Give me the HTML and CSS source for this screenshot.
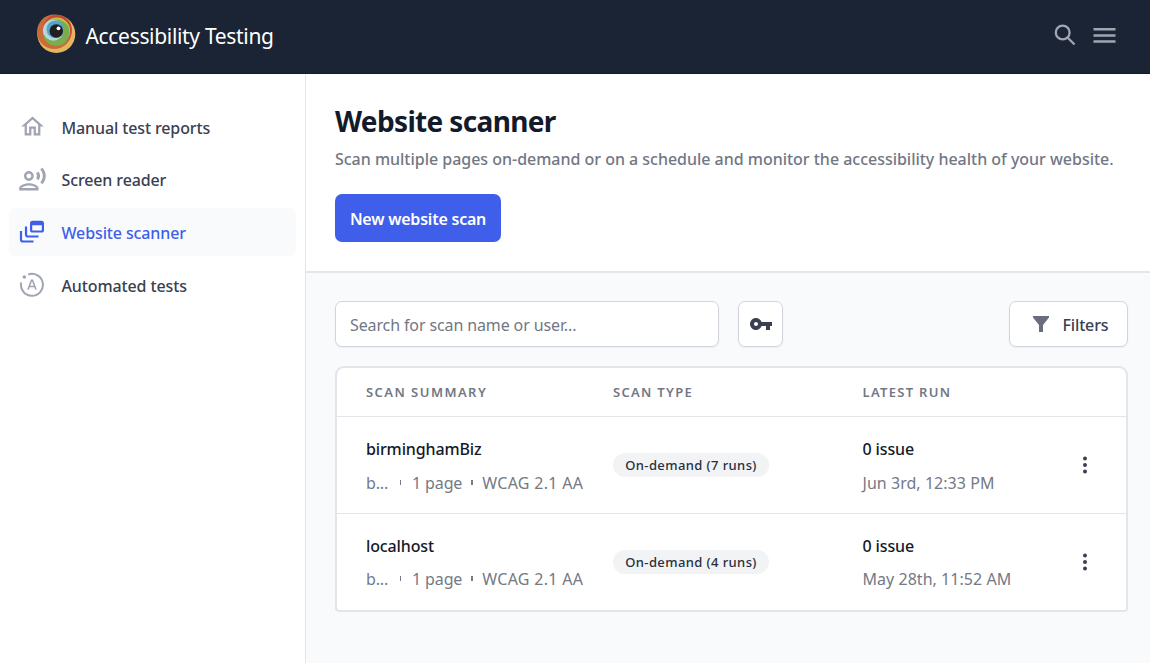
FILE: index.html
```html
<!DOCTYPE html>
<html lang="en">
<head>
<meta charset="utf-8">
<title>Website scanner</title>
<link rel="stylesheet" href="styles.css">
</head>
<body>
<header class="topbar">
  <svg class="logo" width="40" height="40" viewBox="0 0 40 40"><circle cx="20.300" cy="20" r="19" fill="#e5b562"/><circle cx="18.300" cy="17.800" r="17.300" fill="#cb6c38"/><circle cx="21.200" cy="15.800" r="14.700" fill="#c9443c"/><circle cx="20.700" cy="17" r="13.500" fill="#b9cb42"/><circle cx="20.300" cy="18.600" r="13.200" fill="#79ad4e"/><circle cx="17.300" cy="16.200" r="10.500" fill="#b6d6df"/><circle cx="19.300" cy="15.200" r="8.800" fill="#53a5c9"/><circle cx="20.300" cy="17" r="6.800" fill="#211f20"/><circle cx="22.500" cy="14.300" r="1.900" fill="#fff"/></svg>
  <span class="brand">Accessibility Testing</span>
  <div class="top-actions">
    <svg width="24" height="24" viewBox="0 0 24 24" fill="none" stroke="#a0a5b2" stroke-width="2.300"><circle cx="8.700" cy="8.500" r="6.900"/><path d="m13.500 13.500 7 7"/></svg>
    <svg width="24" height="24" viewBox="0 0 24 24" fill="#a0a5b2"><path d="M.5 4h22v2.500H.5zM.5 10.200h22v2.500H.5zM.5 16.200h22v2.500H.5z"/></svg>
  </div>
</header>
<div class="shell">
  <nav class="sidebar">
    <a class="nav-item"><svg class="home" width="27" height="27" viewBox="0 0 24 24" fill="#a0a4b3"><path d="M12 5.690l5 4.500V18h-2v-6H9v6H7v-7.810l5-4.500M12 3L2 12h3v8h6v-6h2v6h6v-8h3L12 3z"/></svg><span class="n1">Manual test reports</span></a>
    <a class="nav-item"><svg class="voice" width="29" height="29" viewBox="0 0 24 24" fill="#a0a4b3"><path d="M9 13c2.210 0 4-1.790 4-4s-1.790-4-4-4-4 1.790-4 4 1.790 4 4 4zm0-6c1.100 0 2 .9 2 2s-.9 2-2 2-2-.9-2-2 .9-2 2-2zm0 8c-2.670 0-8 1.340-8 4v2h16v-2c0-2.660-5.330-4-8-4zm-6 4c.22-.72 3.310-2 6-2 2.700 0 5.800 1.290 6 2H3zM15.080 7.050c.84 1.180.84 2.710 0 3.890l1.680 1.690c2.020-2.020 2.020-5.070 0-7.270l-1.680 1.690zM20.070 2l-1.630 1.630c2.770 3.020 2.770 7.560 0 10.740L20.070 16c3.900-3.890 3.910-9.950 0-14z"/></svg><span class="n2">Screen reader</span></a>
    <a class="nav-item active"><svg width="26" height="26" viewBox="0 0 26 26" fill="none" stroke="#3f5fea" stroke-width="2.200"><path d="M2 12v8.500a2 2 0 0 0 2 2h10.500M7 7.500v8a2 2 0 0 0 2 2h10.500"/><rect x="12.100" y="2.900" width="11.800" height="9.600" rx="1.500"/><path d="M12 4.500h12" stroke-width="3.500"/></svg><span class="n3">Website scanner</span></a>
    <a class="nav-item"><svg width="26" height="26" viewBox="0 0 26 26" fill="none" stroke="#a0a4b3" stroke-width="2"><path d="M9.200 2.500A11 11 0 1 1 2.200 10.500"/><circle cx="5.300" cy="5" r="1.800" fill="#a0a4b3" stroke="none"/><path d="m9 17.500 3.500-9.300h1l3.500 9.300M10.300 14.500h5.400" stroke-width="1.600"/></svg><span class="n4">Automated tests</span></a>
  </nav>
  <main class="main">
    <section class="hero">
      <h1>Website scanner</h1>
      <p><span>Scan multiple pages on-demand or on a schedule and monitor the accessibility health of your website.</span></p>
      <button class="primary">New website scan</button>
    </section>
    <section class="content">
      <div class="toolbar">
        <div class="search">Search for scan name or user...</div>
        <button class="key" aria-label="Key"><svg width="24" height="24" viewBox="0 0 24 24" fill="#3a4052"><path d="M12.650 10C11.830 7.670 9.610 6 7 6c-3.310 0-6 2.690-6 6s2.690 6 6 6c2.610 0 4.830-1.670 5.650-4H17v4h4v-4h2v-4H12.650zM7 14c-1.100 0-2-.9-2-2s.9-2 2-2 2 .9 2 2-.9 2-2 2z"/></svg></button>
        <button class="filters"><svg width="16" height="16" viewBox="0 0 16 16" fill="#686e7d"><path d="M0 0h16v1.500L10 9v7H6V9L0 1.500z"/></svg><span>Filters</span></button>
      </div>
      <div class="table">
        <div class="row head"><div><span class="h-summary">SCAN SUMMARY</span></div><div><span>SCAN TYPE</span></div><div><span>LATEST RUN</span></div><div></div></div>
        <div class="row">
          <div class="stack"><span class="name">birminghamBiz</span><div class="meta"><span class="short">b...</span><i class="thin"></i><span class="pages">1 page</span><i></i><span class="wcag">WCAG 2.1 AA</span></div></div>
          <div><span class="pill">On-demand (7 runs)</span></div>
          <div class="stack"><span class="name issue">0 issue</span><span class="date">Jun 3rd, 12:33 PM</span></div>
          <div class="menu"><svg width="6" height="18" viewBox="0 0 6 18" fill="#3a4052"><circle cx="3" cy="2.400" r="2"/><circle cx="3" cy="9" r="2"/><circle cx="3" cy="15.600" r="2"/></svg></div>
        </div>
        <div class="row">
          <div class="stack"><span class="name host">localhost</span><div class="meta"><span class="short">b...</span><i class="thin"></i><span class="pages">1 page</span><i></i><span class="wcag">WCAG 2.1 AA</span></div></div>
          <div><span class="pill">On-demand (4 runs)</span></div>
          <div class="stack"><span class="name issue">0 issue</span><span class="date">May 28th, 11:52 AM</span></div>
          <div class="menu"><svg width="6" height="18" viewBox="0 0 6 18" fill="#3a4052"><circle cx="3" cy="2.400" r="2"/><circle cx="3" cy="9" r="2"/><circle cx="3" cy="15.600" r="2"/></svg></div>
        </div>
      </div>
    </section>
  </main>
</div>
</body>
</html>
```
FILE: styles.css
```css
* { box-sizing: border-box; }
body { margin: 0; height: 663px; overflow: hidden; display: flex; flex-direction: column; font-family: "Noto Sans", "Open Sans", sans-serif; font-size: 16px; color: #3a4052; background: #fff; }
button { font: inherit; margin: 0; }
span { white-space: nowrap; }
svg { display: block; flex: none; }
.topbar { height: 74px; flex: none; background: #1a2434; display: flex; align-items: center; padding: 0 33px 0 36px; border-bottom: 1px solid #141c2a; }
.logo { margin-top: -5px; }
.brand { color: #fff; font-size: 21px; letter-spacing: -.32px; margin: -1px 0 0 9.500px; }
.top-actions { margin-left: auto; display: flex; gap: 15px; margin-top: -2px; }
.shell { flex: 1; display: flex; min-height: 0; }
.sidebar { width: 306px; flex: none; border-right: 1px solid #e4e5ea; padding: 29px 9px; display: flex; flex-direction: column; gap: 4.700px; }
.nav-item { height: 48px; width: 287px; border-radius: 7px; display: flex; align-items: center; font-weight: 500; letter-spacing: -.12px; padding-left: 53px; }
.nav-item svg { margin-left: -43px; margin-right: 16.500px; }
.nav-item .voice { margin-left: -44px; margin-right: 14.500px; margin-top: -1px; }
.nav-item .home { margin-right: 15.500px; margin-top: -2px; }
.n1, .n3, .n4 { padding-top: 2px; }
.active { background: #f9fafc; color: #3f5fea; }
.main { flex: 1; min-width: 0; display: flex; flex-direction: column; }
.hero { height: 199px; flex: none; border-bottom: 2px solid #e5e6ea; padding: 26px 29px; }
h1 { margin: 0; font-size: 28px; line-height: 42px; font-weight: 700; color: #131a29; letter-spacing: -.65px; }
.hero p { margin: 4px 0 0; line-height: 26px; color: #727784; font-weight: 500; letter-spacing: -.02px; }
.primary { display: block; margin-top: 22px; width: 166px; height: 48px; padding: 1px 0 0; border: 0; border-radius: 7px; background: #3f5fea; color: #fff; font-weight: 600; letter-spacing: -.22px; white-space: nowrap; }
.content { flex: 1; background: #f9fafc; padding: 28px 22px 0 29px; }
.toolbar { display: flex; height: 46px; }
.search, .key, .filters { background: #fff; border: 1px solid #d2d5dc; border-radius: 7px; box-shadow: 0 1px 2px #0000000d; display: flex; align-items: center; }
.search { width: 384px; padding: 1px 14px 0; color: #727784; letter-spacing: -.12px; }
.key { width: 45px; margin-left: 19px; padding: 0; justify-content: center; }
.filters { width: 119px; margin-left: auto; padding: 1px 0 0 23px; gap: 13.500px; color: #3a4052; font-weight: 500; letter-spacing: -.15px; }
.filters svg { margin-top: -1px; }
.table { margin-top: 19px; height: 246px; background: #fff; border: 2px solid #e4e5ea; border-radius: 9px 9px 4px 4px; }
.row { height: 97px; display: grid; grid-template-columns: 247px 249.500px 210px 1fr; padding-left: 29px; align-items: center; border-bottom: 1px solid #e4e5ea; }
.row:last-child { height: 96px; border-bottom: 0; }
.head { height: 49px; font-size: 13px; font-weight: 600; letter-spacing: 1.300px; color: #727784; }
.h-summary { letter-spacing: 1.450px; }
.stack { display: flex; flex-direction: column; gap: 10px; color: #737986; padding-top: 1px; }
.row:last-child .stack { gap: 9px; padding-top: 0; }
.stack > * { line-height: 24px; }
.name { color: #131a29; font-weight: 500; letter-spacing: -.13px; }
.meta { display: flex; align-items: center; letter-spacing: -.15px; }
.meta i { width: 2px; height: 5px; background: #737986; margin: 0 9px; }
.meta .thin { width: 1px; margin-left: 12px; margin-right: 11px; }
.wcag { letter-spacing: .3px; }
.date { letter-spacing: .04px; }
.pill { display: inline-block; vertical-align: middle; width: 156px; height: 24px; line-height: 24px; text-align: center; border-radius: 12px; background: #f2f3f5; font-size: 13px; font-weight: 500; letter-spacing: .4px; color: #292f3f; }
.menu { padding-left: 9px; }
```
